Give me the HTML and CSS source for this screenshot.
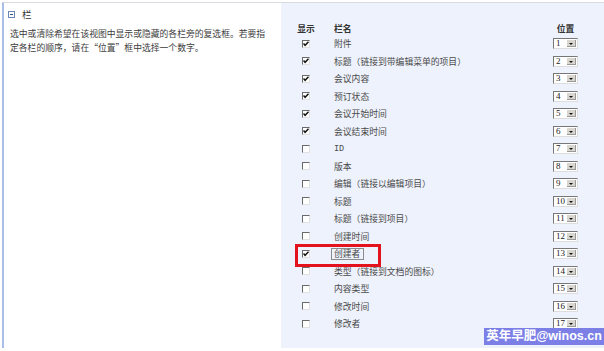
FILE: index.html
```html
<!DOCTYPE html>
<html lang="zh-CN">
<head>
  <meta charset="UTF-8">
  <title>栏</title>
  <link rel="stylesheet" href="styles.css">
</head>
<body>
  <div class="section">
    <div class="intro">
      <div class="title">
        <svg class="toggle" width="7" height="7" viewBox="0 0 7 7"><rect x="0.5" y="0.5" width="6" height="6" fill="#fff" stroke="#6d87b8"/><path d="M2 3.5h3" stroke="#34507f"/></svg>
        <span>栏</span>
      </div>
      <p class="desc">选中或清除希望在该视图中显示或隐藏的各栏旁的复选框。若要指<br>定各栏的顺序，请在“位置”框中选择一个数字。</p>
    </div>

    <div class="panel">
      <div class="grid" id="grid">
        <div class="head">显示</div>
        <div class="head name">栏名</div>
        <div class="head pos">位置</div>
      </div>
      <div class="mark"></div>
      <div class="watermark">英年早肥@winos.cn</div>
    </div>
  </div>

  <script>
    const columns = [
      ['附件', true], ['标题（链接到带编辑菜单的项目）', true], ['会议内容', true],
      ['预订状态', true], ['会议开始时间', true], ['会议结束时间', true],
      ['ID', false], ['版本', false], ['编辑（链接以编辑项目）', false],
      ['标题', false], ['标题（链接到项目）', false], ['创建时间', false],
      ['创建者', true], ['类型（链接到文档的图标）', false], ['内容类型', false],
      ['修改时间', false], ['修改者', false]
    ];
    const grid = document.getElementById('grid');
    const tick = '<svg width="6" height="6" viewBox="0 0 6 6"><path d="M0.5 2.5l1.6 1.8L5.5 0.8" fill="none" stroke="#111" stroke-width="1.5"/></svg>';

    columns.forEach(([name, shown], i) => {
      const check = document.createElement('div');
      check.className = 'cell';
      check.innerHTML = '<span class="box">' + (shown ? tick : '') + '</span>';

      const label = document.createElement('div');
      label.className = 'cell label';
      const text = document.createElement('span');
      text.textContent = name;
      if (name === 'ID') text.className = 'latin';
      if (name === '创建者') text.className = 'focus';
      label.appendChild(text);

      const pos = document.createElement('div');
      pos.className = 'cell pos';
      pos.innerHTML = '<span class="select"><span class="num">' + (i + 1) + '</span><span class="btn"></span></span>';

      grid.append(check, label, pos);
    });
  </script>
</body>
</html>
```

FILE: styles.css
```css
body {
  margin: 0;
  background: #fff;
  font-family: "Noto Sans CJK SC", "Noto Sans", sans-serif;
  font-size: 8.8px;
  color: #4a4a4a;
}

.section {
  display: flex;
  margin-top: 2px;
  margin-left: 2px;
  height: 345px;
  border-top: 1px solid #d9dbe0;
  border-left: 2px solid #a9bfe8;
}

.intro {
  width: 273px;
  padding: 4px 0 0 4px;
}

.title {
  display: flex;
  align-items: center;
  gap: 7px;
  height: 14px;
  color: #333;
  font-size: 9.5px;
}

.toggle {
  display: block;
}

.desc {
  margin: 6px 0 0 2px;
  line-height: 13.5px;
  color: #3c3c3c;
}

.panel {
  position: relative;
  flex: 1;
  background: #eef2fc;
  padding: 20px 26px 14px 15px;
}

.grid {
  display: grid;
  grid-template-columns: 20px 1fr 25px;
  grid-template-rows: 12px;
  grid-auto-rows: 17.5px;
  column-gap: 18px;
}

.head {
  line-height: 12px;
  font-weight: bold;
  color: #333;
  text-align: center;
}

.head.name {
  text-align: left;
}

.cell {
  display: flex;
  align-items: center;
  justify-content: center;
}

.cell.label {
  justify-content: flex-start;
}

.latin {
  font-family: "Liberation Mono", monospace;
  font-size: 8.5px;
}

.focus {
  border: 1px solid #8a8a8a;
  padding: 0 3px 0 2px;
  margin-left: -3px;
  line-height: 10px;
}

.box {
  display: flex;
  align-items: center;
  justify-content: center;
  width: 6px;
  height: 6px;
  background: #fff;
  border-top: 1px solid #6a6a6a;
  border-left: 1px solid #6a6a6a;
  border-right: 1px solid #e2e2e2;
  border-bottom: 1px solid #e2e2e2;
}

.select {
  display: flex;
  width: 25px;
  height: 11px;
  box-sizing: border-box;
  background: #fff;
  border-top: 1px solid #777;
  border-left: 1px solid #777;
  border-right: 1px solid #ddd;
  border-bottom: 1px solid #ddd;
}

.num {
  flex: 1;
  padding-left: 2px;
  font-family: "Liberation Serif", serif;
  font-size: 9px;
  line-height: 9px;
  color: #222;
}

.btn {
  position: relative;
  width: 8px;
  margin: 1px;
  background: #d9d6cf;
  border-right: 1px solid #999;
  border-bottom: 1px solid #999;
}

.btn::after {
  content: "";
  position: absolute;
  left: 2px;
  top: 3px;
  border-left: 2px solid transparent;
  border-right: 2px solid transparent;
  border-top: 2px solid #111;
}

.mark {
  position: absolute;
  left: 14px;
  top: 241px;
  width: 86px;
  height: 23px;
  box-sizing: border-box;
  border: 3px solid #e3121c;
}

.watermark {
  position: absolute;
  right: 0;
  top: 325px;
  width: 120px;
  height: 17px;
  background: #7b7fe6;
  color: #fff;
  font-family: "Liberation Sans", "Noto Sans CJK SC", sans-serif;
  font-size: 12.5px;
  font-weight: bold;
  line-height: 17px;
  white-space: nowrap;
  text-align: center;
}
```
